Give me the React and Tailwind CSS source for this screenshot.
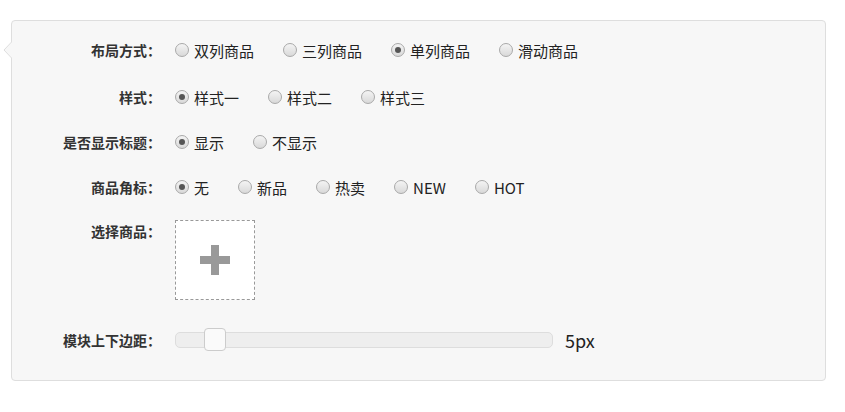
const font = { fontFamily: '"Microsoft YaHei", "Noto Sans CJK SC", "Noto Sans", sans-serif' };

const rows = [
  { label: "布局方式：", options: ["双列商品", "三列商品", "单列商品", "滑动商品"], checked: 2 },
  { label: "样式：", options: ["样式一", "样式二", "样式三"], checked: 0 },
  { label: "是否显示标题：", options: ["显示", "不显示"], checked: 0 },
  { label: "商品角标：", options: ["无", "新品", "热卖", "NEW", "HOT"], checked: 0 },
];

function Radio({ text, checked }) {
  return (
    <label className="flex items-center gap-[5px] mr-[29px] text-[15px] text-[#222] leading-none">
      <span className="w-[14px] h-[14px] rounded-full border border-[#a9a9a9] bg-gradient-to-b from-[#f4f4f4] to-[#d9d9d9] flex items-center justify-center">
        {checked && <span className="w-[6px] h-[6px] rounded-full bg-[#555]" />}
      </span>
      <span>{text}</span>
    </label>
  );
}

function Label({ children }) {
  return (
    <div className="w-[149px] shrink-0 text-right text-[14px] font-bold text-[#333]">
      {children}
    </div>
  );
}

export default function App() {
  return (
    <div className="w-[845px] h-[412px] bg-white pt-[20px] pl-[11px]" style={font}>
      <div className="relative w-[815px] h-[361px] bg-[#f7f7f7] border border-[#dedede] rounded-[4px] pt-[17px]">
        <svg className="absolute left-[-9px] top-[20px]" width="10" height="18" viewBox="0 0 10 18">
          <polygon points="9.5,0 1,9 9.5,18" fill="#f7f7f7" stroke="#dedede" />
          <rect x="9" y="0" width="2" height="18" fill="#f7f7f7" />
        </svg>
        {rows.map((r, i) => (
          <div
            key={r.label}
            className={`flex items-center h-[24px] ${i === 0 ? "mb-[23px]" : "mb-[21px]"}`}
          >
            <Label>{r.label}</Label>
            <div className="flex items-center ml-[14px]">
              {r.options.map((o, j) => (
                <Radio key={o} text={o} checked={j === r.checked} />
              ))}
            </div>
          </div>
        ))}
        <div className="flex items-start">
          <div className="h-[22px] flex items-center">
            <Label>选择商品：</Label>
          </div>
          <div className="ml-[14px] w-[80px] h-[80px] bg-white border border-dashed border-[#999] flex items-center justify-center">
            <svg width="30" height="30" viewBox="0 0 30 30">
              <rect x="11" y="0" width="8" height="30" fill="#999" />
              <rect x="0" y="11" width="30" height="8" fill="#999" />
            </svg>
          </div>
        </div>
        <div className="flex items-center h-[24px] mt-[28px]">
          <Label>模块上下边距：</Label>
          <div className="relative ml-[14px] w-[378px] h-[16px] bg-[#eee] border border-[#ddd] rounded-[5px]">
            <div className="absolute left-[28px] top-[-5px] w-[22px] h-[23px] bg-[#fafafa] border border-[#ccc] rounded-[4px]" />
          </div>
          <span className="ml-[12px] text-[18px] text-[#222] leading-none">5px</span>
        </div>
      </div>
    </div>
  );
}
